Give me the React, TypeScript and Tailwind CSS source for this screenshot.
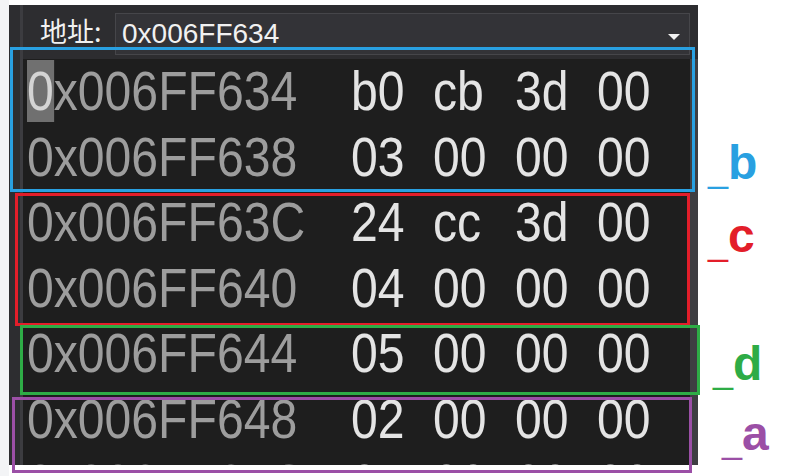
import React from 'react';

const rows = [
  { addr: '0x006FF634', bytes: ['b0', 'cb', '3d', '00'] },
  { addr: '0x006FF638', bytes: ['03', '00', '00', '00'] },
  { addr: '0x006FF63C', bytes: ['24', 'cc', '3d', '00'] },
  { addr: '0x006FF640', bytes: ['04', '00', '00', '00'] },
  { addr: '0x006FF644', bytes: ['05', '00', '00', '00'] },
  { addr: '0x006FF648', bytes: ['02', '00', '00', '00'] },
  { addr: '0x006FF64C', bytes: ['01', '00', '00', '00'] },
];

// the debugger font is a narrow sans; squeeze Liberation Sans to match
function Narrow({ children }: { children: React.ReactNode }) {
  return <span className="inline-block origin-left scale-x-[0.875]">{children}</span>;
}

function MemoryRow({ addr, bytes, first }: { addr: string; bytes: string[]; first?: boolean }) {
  return (
    <div className="grid grid-cols-[324px_82px_82px_82px_82px] h-[65.5px] text-[55px] leading-[65.5px] font-['Liberation_Sans',sans-serif] whitespace-nowrap">
      <div className="text-[#9d9d9d]">
        <Narrow>
          {first ? (
            <>
              <span className="bg-[#707070] text-[#d4d4d4]">{addr[0]}</span>
              {addr.slice(1)}
            </>
          ) : (
            addr
          )}
        </Narrow>
      </div>
      {bytes.map((b, i) => (
        <div key={i} className="text-[#e4e4e4]">
          <Narrow>{b}</Narrow>
        </div>
      ))}
    </div>
  );
}

function Label({ u, letter, color, top, left }: { u: string; letter: string; color: string; top: string; left: string }) {
  return (
    <div className={`absolute ${top} ${left} ${color} leading-none whitespace-nowrap font-['Liberation_Sans',sans-serif]`}>
      <span className="inline-block text-[36px] translate-y-[3px]">{u}</span>
      <span className="text-[48px] font-bold">{letter}</span>
    </div>
  );
}

export default function App() {
  return (
    <div className="relative w-[797px] h-[476px] bg-white overflow-hidden flex">
      <div className="w-[9px] h-full bg-[#f3f4f6]" />

      <div className="mt-[5px] w-[689px] h-[460px] bg-[#2d2d30] flex overflow-hidden">
        <div className="w-[11px]" />
        <div className="w-[3px] bg-[#3c3c40]" />

        <div className="flex-1 flex flex-col min-h-0">
          {/* toolbar */}
          <div className="h-[54px] shrink-0 flex items-start pl-[17px] pr-[8px]">
            <div className="w-[75px] mt-[12px] text-[27px] leading-[27px] text-[#f1f1f1] font-['Noto_Sans_CJK_SC',sans-serif]">
              地址:
            </div>
            <div className="flex-1 mt-[8px] h-[42px] bg-[#333337] border border-[#46464a] flex items-start justify-between pl-[6px] pr-[8px]">
              <span className="pt-[6px] text-[28px] leading-[28px] text-[#f1f1f1] font-['Liberation_Sans',sans-serif]">
                0x006FF634
              </span>
              <svg className="mt-[19px]" width="14" height="8" viewBox="0 0 14 8">
                <path d="M1 1 L13 1 L7 7 Z" fill="#f1f1f1" />
              </svg>
            </div>
          </div>

          {/* memory view */}
          <div className="flex-1 min-h-0 flex overflow-hidden">
            <div className="flex-1 bg-[#1e1e1e] pl-[4px] overflow-hidden">
              {rows.map((r, i) => (
                <MemoryRow key={r.addr} addr={r.addr} bytes={r.bytes} first={i === 0} />
              ))}
            </div>
            <div className="w-[8px] bg-[#3e3e42]" />
          </div>
        </div>
      </div>

      {/* annotation boxes */}
      <div className="absolute left-[10px] top-[47px] w-[685px] h-[145px] border-[3px] border-[#29a0e1]" />
      <div className="absolute left-[15px] top-[193px] w-[675px] h-[133px] border-[3px] border-[#e31e2a]" />
      <div className="absolute left-[20px] top-[325px] w-[680px] h-[70px] border-[3px] border-[#2eac46]" />
      <div className="absolute left-[12px] top-[397px] w-[680px] h-[76px] border-[3px] border-[#9b4fa6]" />

      <Label u="_" letter="b" color="text-[#29a0e1]" top="top-[139px]" left="left-[708px]" />
      <Label u="_" letter="c" color="text-[#e31e2a]" top="top-[212px]" left="left-[708px]" />
      <Label u="_" letter="d" color="text-[#2eac46]" top="top-[340px]" left="left-[713px]" />
      <Label u="_" letter="a" color="text-[#9b4fa6]" top="top-[410px]" left="left-[722px]" />
    </div>
  );
}
